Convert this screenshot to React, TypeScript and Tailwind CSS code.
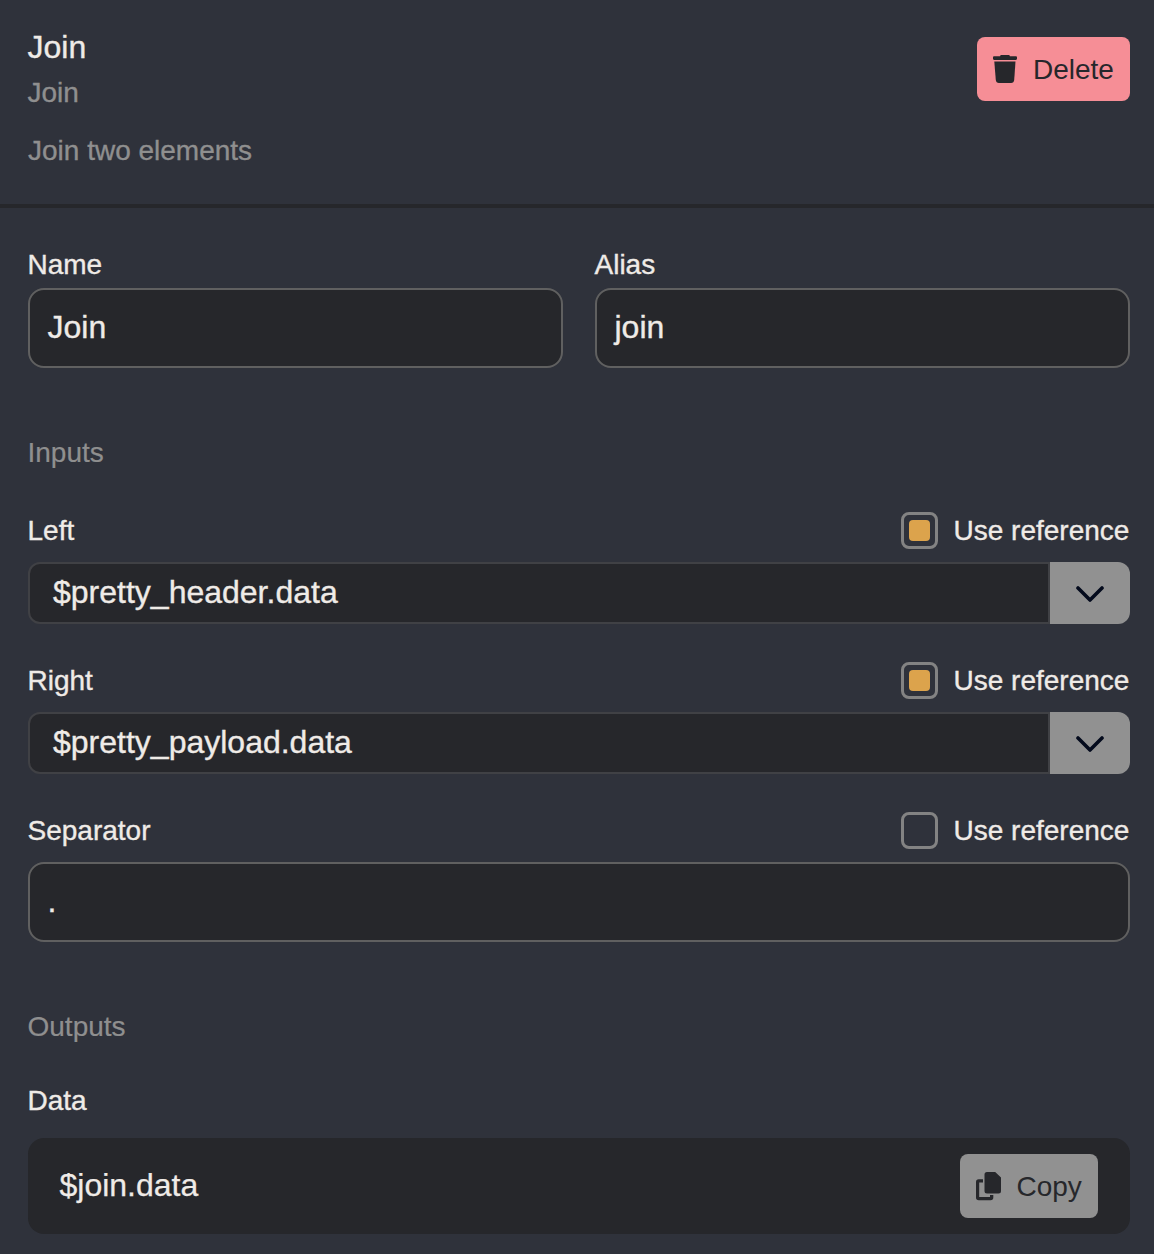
import React, { useState } from "react";

function TrashIcon() {
  return (
    <svg width="24" height="28" viewBox="0 0 24 28" fill="currentColor" className="shrink-0">
      <path d="M8.300 0h7.400c.6 0 1 .5 1.200 1.300h5.800c.8 0 1.300.5 1.300 1.200v1.200c0 .7-.5 1.200-1.200 1.200H1.200C.5 4.900 0 4.400 0 3.700V2.500c0-.7.5-1.200 1.300-1.200h5.800C7.300.5 7.700 0 8.300 0z" />
      <path d="M1.300 6.600h21.200L21.200 25c-.2 2-1.300 3-3.100 3H5.900c-1.800 0-2.900-1-3.100-3z" />
    </svg>
  );
}

function CopyIcon() {
  return (
    <svg width="25" height="29" viewBox="0 0 25 29" fill="currentColor" className="shrink-0">
      <path d="M11 0h8.200L25 5.600V19a2.500 2.500 0 0 1-2.500 2.500H11A2.500 2.500 0 0 1 8.500 19V2.500A2.500 2.500 0 0 1 11 0z" />
      <path d="M7 7.300v3.200H3.200V24.900h10.800V23.100h3.300v2.400a2.700 2.700 0 0 1-2.700 2.700H2.700A2.700 2.700 0 0 1 0 25.500V10a2.700 2.700 0 0 1 2.700-2.700z" />
    </svg>
  );
}

function ChevronIcon() {
  return (
    <svg width="28" height="16" viewBox="0 0 28 16" fill="none" className="mt-0.5">
      <path d="M2 2l12 12L26 2" stroke="#030a1c" strokeWidth="3.6" strokeLinecap="round" strokeLinejoin="round" />
    </svg>
  );
}

const label = "h-10 text-[28px] leading-[41px] -indent-[0.5px] [-webkit-text-stroke:0.35px]";
const heading = "h-10 text-[28px] leading-[41px] -indent-[0.5px] text-[#8f8f8f] [-webkit-text-stroke:0.2px]";

function TextField({ title, value }: { title: string; value: string }) {
  return (
    <div className="min-w-0 flex-1">
      <div className={label}>{title}</div>
      <TextBox value={value} className="mt-1" />
    </div>
  );
}

function TextBox({ value, className }: { value: string; className: string }) {
  return (
    <div
      className={`${className} flex h-20 items-center rounded-2xl border-2 border-[#606060] bg-[#26272b] px-[18px] pb-0.5 text-[32px] leading-[40px] -indent-[0.5px] [-webkit-text-stroke:0.35px]`}
    >
      {value}
    </div>
  );
}

function ReferenceRow({ title, initial }: { title: string; initial: boolean }) {
  const [checked, setChecked] = useState(initial);
  return (
    <div className="flex h-10 items-center justify-between">
      <div className={label}>{title}</div>
      <button className="flex items-center gap-4 text-left" onClick={() => setChecked(!checked)}>
        <span className="flex size-[37px] items-center justify-center rounded-[8px] border-3 border-[#838383]">
          {checked && <span className="size-[21px] rounded-[4px] bg-[#dca34c]" />}
        </span>
        <span className={`w-[176px] whitespace-nowrap ${label}`}>Use reference</span>
      </button>
    </div>
  );
}

function ReferenceSelect({ value }: { value: string }) {
  return (
    <div className="mt-3 flex h-[62px]">
      <div className="flex flex-1 items-center rounded-l-xl border-2 border-[#404145] bg-[#26272b] pb-0.5 pl-[23px] text-[32px] leading-[40px] [-webkit-text-stroke:0.35px]">
        {value}
      </div>
      <button className="flex w-20 items-center justify-center rounded-r-xl bg-[#919191]">
        <ChevronIcon />
      </button>
    </div>
  );
}

export default function App() {
  return (
    <div className="h-[1254px] w-[1154px] overflow-hidden bg-[#2f323b] font-['Liberation_Sans',Arial,sans-serif] text-[#efebe7]">
      <header className="flex h-[208px] items-start justify-between border-b-4 border-[#26272b] pr-6 pl-7">
        <div className="pt-[27px]">
          <h1 className="text-[32px] leading-[40px] -indent-[0.5px] [-webkit-text-stroke:0.35px]">Join</h1>
          <p className="mt-[5px] text-[28px] leading-[41px] -indent-[0.5px] text-[#8f8f8f] [-webkit-text-stroke:0.35px]">Join</p>
          <p className="mt-[17px] text-[28px] leading-[41px] text-[#8f8f8f] [-webkit-text-stroke:0.35px]">Join two elements</p>
        </div>
        <button className="mt-[37px] flex h-16 w-[153px] items-center gap-4 rounded-lg bg-[#f68e96] pl-4 text-[28px] text-[#26272b]">
          <TrashIcon />
          <span className="h-10 leading-[41px]">Delete</span>
        </button>
      </header>

      <main className="pt-9 pr-6 pl-7">
        <div className="flex gap-8">
          <TextField title="Name" value="Join" />
          <TextField title="Alias" value="join" />
        </div>

        <h2 className={`mt-16 ${heading}`}>Inputs</h2>

        <section className="mt-[38px]">
          <ReferenceRow title="Left" initial={true} />
          <ReferenceSelect value="$pretty_header.data" />
        </section>
        <section className="mt-9">
          <ReferenceRow title="Right" initial={true} />
          <ReferenceSelect value="$pretty_payload.data" />
        </section>
        <section className="mt-9">
          <ReferenceRow title="Separator" initial={false} />
          <TextBox value="." className="mt-3" />
        </section>

        <h2 className={`mt-16 ${heading}`}>Outputs</h2>

        <div className={`mt-[34px] ${label}`}>Data</div>
        <div className="mt-[18px] flex h-24 items-center justify-between rounded-2xl bg-[#26272b] pr-8 pl-8">
          <span className="pb-0.5 text-[32px] leading-[40px] -indent-[0.5px] [-webkit-text-stroke:0.25px]">$join.data</span>
          <button className="flex h-16 w-[138px] items-center gap-4 rounded-lg bg-[#919191] pl-4 text-[28px] text-[#26272b]">
            <CopyIcon />
            <span className="h-10 leading-[41px] -indent-[0.5px]">Copy</span>
          </button>
        </div>
      </main>
    </div>
  );
}
